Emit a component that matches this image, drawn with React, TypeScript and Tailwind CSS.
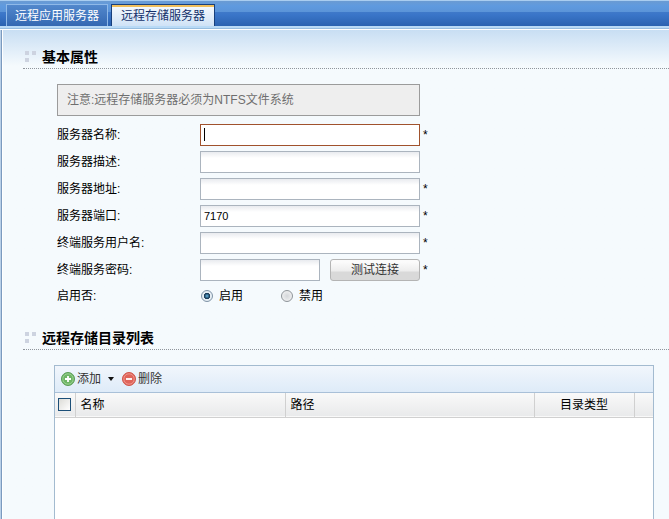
import { useState } from "react";

const tabs = [
  { id: "app", label: "远程应用服务器" },
  { id: "storage", label: "远程存储服务器" },
];

const fields = [
  { id: "desc", label: "服务器描述:", value: "", required: false },
  { id: "address", label: "服务器地址:", value: "", required: true },
  { id: "port", label: "服务器端口:", value: "7170", required: true },
  { id: "user", label: "终端服务用户名:", value: "", required: true },
];

const labelClass = "w-[143px] shrink-0";

const inputClass =
  "h-[22px] border border-[#abb4be] bg-linear-to-b from-[#e9ebef] via-white via-30% to-white px-[3px] text-[11px] outline-none";

const Star = () => <span className="ml-[3px] w-2 text-xs leading-5">*</span>;

const SectionTitle = ({ children }: { children: string }) => (
  <div className="ml-[23px] flex h-6 items-start border-b border-dotted border-[#8f959c] pl-[2px]">
    <svg className="mt-[6px] mr-[6px] shrink-0" width="11" height="11" aria-hidden="true">
      <g fill="#cdd3e0">
        <rect x="0" y="0" width="4" height="4" />
        <rect x="7" y="0" width="4" height="4" />
        <rect x="0" y="7" width="4" height="4" />
      </g>
    </svg>
    <h2 className="text-sm leading-6 font-bold">{children}</h2>
  </div>
);

const AddIcon = () => (
  <svg width="14" height="14" viewBox="0 0 14 14" aria-hidden="true">
    <circle cx="7" cy="7" r="6.5" fill="#6db565" stroke="#5a9c55" />
    <circle cx="7" cy="7" r="5.2" fill="none" stroke="#a5d59b" strokeWidth="0.8" />
    <path d="M7 4v6M4 7h6" stroke="#fff" strokeWidth="1.8" />
  </svg>
);

const DeleteIcon = () => (
  <svg width="14" height="14" viewBox="0 0 14 14" aria-hidden="true">
    <circle cx="7" cy="7" r="6.5" fill="#e0645a" stroke="#cf5449" />
    <circle cx="7" cy="7" r="5.2" fill="none" stroke="#f0a198" strokeWidth="0.8" />
    <path d="M4 7h6" stroke="#fff" strokeWidth="1.8" />
  </svg>
);

const App = () => {
  const [activeTab, setActiveTab] = useState("storage");
  const [enabled, setEnabled] = useState(true);
  const [name, setName] = useState("");

  const radioClass =
    "size-3 appearance-none rounded-full border border-[#8e9499] bg-radial from-[#d4d7da] to-[#f8f8f8] checked:border-[#7f93a6] checked:from-[#5fa8d0] checked:from-5% checked:via-[#12334f] checked:via-40% checked:to-[#e6eef4] checked:to-50%";

  return (
    <div className="flex min-h-screen flex-col bg-[#f5fafd] font-['Liberation_Sans','Noto_Sans_CJK_SC',sans-serif] text-xs text-black">
      {/* Tabs */}
      <nav className="flex h-[26px] items-end gap-[3px] border-t border-[#a9cdf0] bg-[linear-gradient(#6a9bd3,#5f9adf_5px,#5b94d8_11px,#3f79c9_11px,#3a75c8_14px,#2a62b0)] pl-[6px]">
        {tabs.map((tab) => (
          <button
            key={tab.id}
            type="button"
            onClick={() => setActiveTab(tab.id)}
            className={
              tab.id === activeTab
                ? "h-[22px] border border-b-0 border-[#173f7c] bg-linear-to-b from-[#f7fbff] to-[#cfe2f6] px-[9px] text-[#15316b] shadow-[inset_0_2px_0_#f0bf5c]"
                : "h-[22px] border border-b-0 border-[#8fb9e8] bg-linear-to-b from-[#5288cc] to-[#3468b2] px-2 text-white"
            }
          >
            {tab.label}
          </button>
        ))}
      </nav>
      <div className="h-1 border-b border-white bg-linear-to-b from-[#b9daf6] from-60% to-[#7fa9cf]" />

      <main className="flex grow flex-col border-l border-[#b9d0e8] bg-linear-to-b from-[#c8def3] to-[#f5fafd] to-[36px] pt-[15px] shadow-[inset_1px_0_0_#7b9abf,inset_2px_0_0_#ffffff]">
        <div className="-ml-px flex grow flex-col">
          {/* Server properties */}
          <SectionTitle>基本属性</SectionTitle>

          <form className="mt-[15px] ml-[57px]" onSubmit={(e) => e.preventDefault()}>
            <p className="mb-2 flex h-8 w-[363px] items-center border border-[#9b9b9b] bg-[#eeeeee] pl-[9px] text-[#6e6e6e]">
              注意:远程存储服务器必须为NTFS文件系统
            </p>

            <div className="flex flex-col gap-[5px]">
              <div className="flex items-center">
                <label htmlFor="name" className={labelClass}>
                  服务器名称:
                </label>
                <div className="relative flex">
                  <input
                    id="name"
                    value={name}
                    onChange={(e) => setName(e.target.value)}
                    className="h-[22px] w-[220px] border border-[#a0522d] bg-white px-[3px] text-[11px] outline-none"
                  />
                  {name === "" && (
                    <span className="pointer-events-none absolute top-1 left-1 h-[13px] w-px bg-black" />
                  )}
                </div>
                <Star />
              </div>

              {fields.map((field) => (
                <div key={field.id} className="flex items-center">
                  <label htmlFor={field.id} className={labelClass}>
                    {field.label}
                  </label>
                  <input id={field.id} defaultValue={field.value} className={`w-[220px] ${inputClass}`} />
                  {field.required && <Star />}
                </div>
              ))}

              <div className="flex items-center">
                <label htmlFor="password" className={labelClass}>
                  终端服务密码:
                </label>
                <input id="password" type="password" className={`w-[120px] ${inputClass}`} />
                <button
                  type="button"
                  className="ml-[10px] h-[22px] w-[90px] rounded-[3px] border border-[#b4b4b4] bg-linear-to-b from-[#fbfbfb] from-10% via-[#ededed] via-55% to-[#d9d9d9] to-60% text-[#333333]"
                >
                  测试连接
                </button>
                <Star />
              </div>
            </div>

            <div className="mt-1 flex h-[22px] items-center" role="radiogroup" aria-label="启用否">
              <span className="w-[144px]">启用否:</span>
              <label className="flex w-20 items-center gap-[6px]">
                <input
                  type="radio"
                  name="enabled"
                  checked={enabled}
                  onChange={() => setEnabled(true)}
                  className={radioClass}
                />
                启用
              </label>
              <label className="flex items-center gap-[6px]">
                <input
                  type="radio"
                  name="enabled"
                  checked={!enabled}
                  onChange={() => setEnabled(false)}
                  className={radioClass}
                />
                禁用
              </label>
            </div>
          </form>

          {/* Storage directories */}
          <div className="mt-[19px]">
            <SectionTitle>远程存储目录列表</SectionTitle>
          </div>

          <section className="mt-[15px] mr-[15px] ml-[54px] flex grow flex-col border border-b-0 border-[#a3bbd0] bg-white">
            <div className="flex h-[27px] items-center border-b border-[#a9c0d8] bg-linear-to-b from-[#f1f6fc] to-[#deebf8] pl-[6px] text-[#333333]">
              <button type="button" className="flex items-center gap-[2px]">
                <AddIcon />
                添加
                <svg className="ml-[5px]" width="6" height="4" aria-hidden="true">
                  <path d="M0 0h6L3 4z" fill="#111" />
                </svg>
              </button>
              <button type="button" className="ml-2 flex items-center gap-[2px]">
                <DeleteIcon />
                删除
              </button>
            </div>

            <table className="w-full table-fixed border-collapse">
              <thead>
                <tr className="h-6 border-b border-[#d0d0d0] bg-linear-to-b from-[#f9f9f9] to-[#e9eaeb]">
                  <th className="w-5 border-r border-[#d0d0d0] p-0">
                    <input
                      type="checkbox"
                      aria-label="全选"
                      className="mx-auto block size-[13px] appearance-none border border-[#1c4f78] bg-linear-to-br from-[#dcdcd7] to-white checked:bg-[#1c4f78]"
                    />
                  </th>
                  <th className="w-[210px] border-r border-[#d0d0d0] p-0 pl-[5px] text-left font-normal">名称</th>
                  <th className="border-r border-[#d0d0d0] p-0 pl-[5px] text-left font-normal">路径</th>
                  <th className="w-[100px] border-r border-[#d0d0d0] p-0 text-center font-normal">目录类型</th>
                  <td className="w-[19px] p-0" />
                </tr>
              </thead>
              <tbody />
            </table>
          </section>
        </div>
      </main>
    </div>
  );
};

export default App;
